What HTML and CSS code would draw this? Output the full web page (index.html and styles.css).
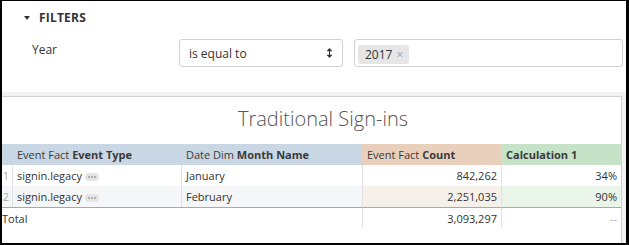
FILE: index.html
```html
<!DOCTYPE html>
<html lang="en">
<head>
    <meta charset="UTF-8">
    <title>Traditional Sign-ins</title>
    <link rel="stylesheet" href="styles.css">
</head>
<body>
<div class="frame">
    <section class="filters">
        <div class="filters-head"><span class="caret"></span>FILTERS</div>
        <div class="filter-row">
            <label class="filter-name">Year</label>
            <div class="select">
                <span>is equal to</span>
                <svg class="updown" width="7" height="10" viewBox="0 0 7 10"><path d="M3.5 0L6.5 3.3H0.5Z M3 3h1v4H3Z M0.5 6.7H6.5L3.5 10Z" fill="#333"/></svg>
            </div>
            <div class="tags"><span class="tag">2017<span class="remove">×</span></span></div>
        </div>
    </section>

    <section class="viz">
        <div class="panel">
            <h2 class="title">Traditional Sign-ins</h2>
            <table class="grid">
                <colgroup>
                    <col class="c-idx"><col class="c-type"><col class="c-month"><col class="c-count"><col class="c-calc">
                </colgroup>
                <thead>
                    <tr>
                        <th class="dim"></th>
                        <th class="dim">Event Fact <b>Event Type</b></th>
                        <th class="dim">Date Dim <b>Month Name</b></th>
                        <th class="measure">Event Fact <b>Count</b></th>
                        <th class="calc"><b>Calculation 1</b></th>
                    </tr>
                </thead>
                <tbody>
                    <tr>
                        <td class="idx">1</td>
                        <td>signin.legacy<span class="more"><svg width="14" height="8" viewBox="0 0 14 8"><circle cx="4" cy="4" r="0.9" fill="#999"/><circle cx="7" cy="4" r="0.9" fill="#999"/><circle cx="10" cy="4" r="0.9" fill="#999"/></svg></span></td>
                        <td>January</td>
                        <td class="num">842,262</td>
                        <td class="num">34%</td>
                    </tr>
                    <tr class="alt">
                        <td class="idx">2</td>
                        <td>signin.legacy<span class="more"><svg width="14" height="8" viewBox="0 0 14 8"><circle cx="4" cy="4" r="0.9" fill="#999"/><circle cx="7" cy="4" r="0.9" fill="#999"/><circle cx="10" cy="4" r="0.9" fill="#999"/></svg></span></td>
                        <td>February</td>
                        <td class="num m">2,251,035</td>
                        <td class="num c">90%</td>
                    </tr>
                    <tr class="total">
                        <td class="total-label" colspan="3">Total</td>
                        <td class="num">3,093,297</td>
                        <td class="num muted">--</td>
                    </tr>
                </tbody>
            </table>
        </div>
    </section>
</div>
</body>
</html>
```

FILE: styles.css
```css
body { margin: 0; font-family: "Open Sans", sans-serif; color: #333; }
.frame { width: 629px; height: 245px; box-sizing: border-box; border: solid #000; border-width: 1px 3px 2px 2px; overflow: hidden; background: #f3f3f3; display: flex; flex-direction: column; }

.filters { background: #fff; height: 91px; box-sizing: border-box; padding: 9px 3px 0 20px; }
.filters-head { display: flex; align-items: center; font-size: 12px; font-weight: 700; line-height: 16px; letter-spacing: 0.2px; }
.caret { width: 0; height: 0; border-left: 3px solid transparent; border-right: 3px solid transparent; border-top: 4px solid #333; margin: 0 9px 0 2px; }
.filter-row { display: flex; align-items: flex-start; margin-top: 13px; padding-left: 10px; }
.filter-name { width: 147px; font-size: 12px; line-height: 16px; padding-top: 3px; }
.select { width: 164px; height: 28px; box-sizing: border-box; border: 1px solid #d3d3d3; border-radius: 3px; padding: 0 9px; display: flex; align-items: center; justify-content: space-between; font-size: 12px; }
.tags { flex: 1; height: 28px; box-sizing: border-box; margin-left: 11px; border: 1px solid #d3d3d3; border-radius: 3px; padding: 2px 3px; }
.tag { display: inline-block; height: 19px; line-height: 19px; background: #e6e6e6; border-radius: 3px; padding: 0 6px 0 7px; font-size: 12px; }
.remove { color: #a0a0a0; font-size: 12px; margin-left: 4px; }

.viz { flex: 1; display: flex; padding: 4px 4px 0 0; }
.panel { flex: 1; background: #fff; border-top: 1px solid #d2d2d2; border-right: 1px solid #cfcfcf; }
.title { margin: 0 0 11px; padding: 8px 0 0 23px; font-size: 20px; font-weight: 300; line-height: 28px; text-align: center; color: #555; }

.grid { border-collapse: separate; border-spacing: 0; table-layout: fixed; width: 619px; font-size: 11px; }
.c-idx { width: 10px; }
.c-type { width: 169px; }
.c-month { width: 181px; }
.c-count { width: 139px; }
.c-calc { width: 120px; }
.grid th, .grid td { box-sizing: border-box; height: 21px; padding: 0 4px; white-space: nowrap; overflow: hidden; }
.grid th { text-align: left; font-weight: 400; color: #3a3a3a; }
.grid th + th, .grid td + td { border-left: 1px solid #e2e2e2; }
.grid th + th { border-left-color: transparent; }
.grid b { font-weight: 700; }
.dim { background: #c9d6e4; }
.measure { background: #e8d0bc; }
.calc { background: #c6e3c7; }
.idx { padding: 0 3px 0 0 !important; text-align: right; color: #aaa; }
.num { text-align: right; }
.alt td { background: #f5f6f8; }
.alt td.m { background: #f6f0eb; }
.alt td.c { background: #eaf5ea; }
.more { display: inline-block; width: 14px; height: 8px; margin-left: 3px; border-radius: 4px; background: #e4e4e4; vertical-align: -1px; }
.more svg { display: block; }
.total td { border-top: 1px solid #a8a8a8; }
.total-label { padding-left: 0 !important; }
.muted { color: #aaa; }
```
